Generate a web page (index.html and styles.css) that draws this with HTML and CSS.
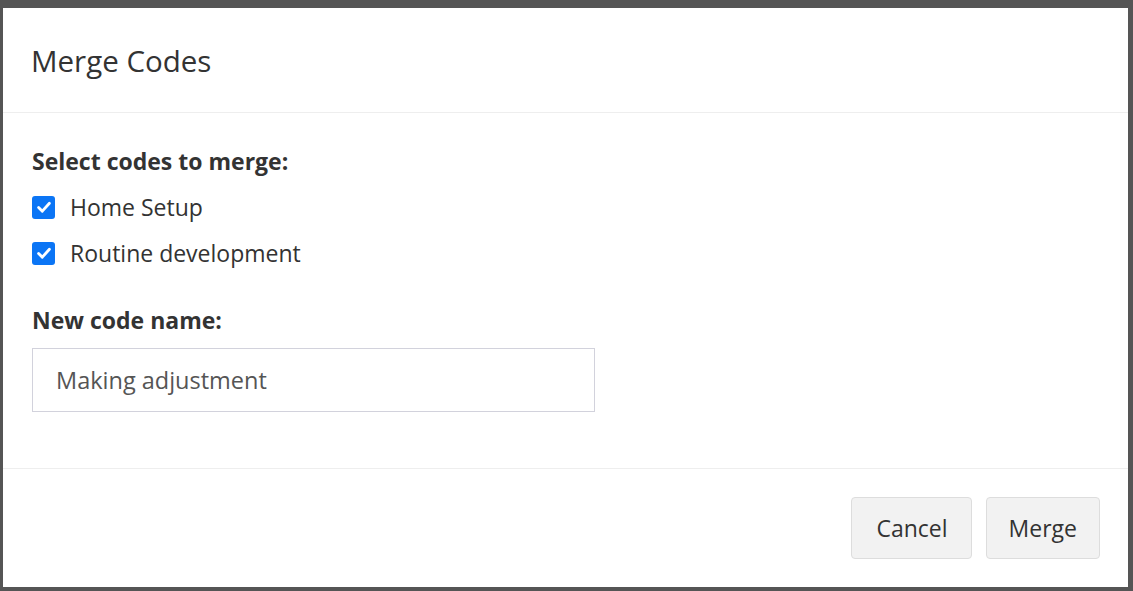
FILE: index.html
```html
<!DOCTYPE html>
<html lang="en">
<head>
<meta charset="utf-8">
<title>Merge Codes</title>
<link rel="stylesheet" href="styles.css">
</head>
<body>
<div class="dialog">
  <div class="dialog-header">
    <h1 class="dialog-title">Merge Codes</h1>
  </div>
  <div class="dialog-body">
    <div class="field-label">Select codes to merge:</div>
    <div class="check-list">
      <label class="check-row">
        <span class="check-box"><svg viewBox="0 0 24 24" width="24" height="24"><path d="M5.5 12.5 L10 17 L18.5 7.5" fill="none" stroke="#fff" stroke-width="3.4" stroke-linecap="round" stroke-linejoin="round"/></svg></span>
        <span class="check-text">Home Setup</span>
      </label>
      <label class="check-row">
        <span class="check-box"><svg viewBox="0 0 24 24" width="24" height="24"><path d="M5.5 12.5 L10 17 L18.5 7.5" fill="none" stroke="#fff" stroke-width="3.4" stroke-linecap="round" stroke-linejoin="round"/></svg></span>
        <span class="check-text">Routine development</span>
      </label>
    </div>
    <div class="field-label name-label">New code name:</div>
    <div class="text-input">Making adjustment</div>
  </div>
  <div class="dialog-footer">
    <button class="btn btn-cancel">Cancel</button>
    <button class="btn">Merge</button>
  </div>
</div>
</body>
</html>
```

FILE: styles.css
```css
html, body {
  margin: 0;
  padding: 0;
  background: #555555;
}
body {
  padding: 8px 5px 4px 3px;
  font-family: "Open Sans", Lato, sans-serif;
  color: #333333;
}
.dialog {
  background: #ffffff;
  height: 579px;
  display: flex;
  flex-direction: column;
}
.dialog-header {
  height: 104px;
  border-bottom: 1px solid #eeeeee;
  display: flex;
  align-items: center;
  padding-left: 28px;
}
.dialog-title {
  margin: 0;
  font-weight: 400;
  font-size: 29.5px;
  line-height: 36px;
  color: #333333;
  position: relative;
  top: 1px;
}
.dialog-body {
  flex: 1;
  padding: 34px 29px 0 29px;
  border-bottom: 1px solid #eeeeee;
}
.field-label {
  font-weight: 700;
  font-size: 23px;
  line-height: 28px;
  color: #333333;
}
.check-list {
  margin-top: 9px;
}
.check-row {
  display: flex;
  align-items: center;
  gap: 15px;
  height: 46px;
}
.check-box {
  width: 23px;
  height: 23px;
  border-radius: 3px;
  background: #0b75f5;
  display: flex;
  align-items: center;
  justify-content: center;
  flex: none;
}
.check-box svg {
  width: 20px;
  height: 20px;
}
.check-text {
  font-size: 23px;
  color: #333333;
}
.name-label {
  margin-top: 30px;
}
.text-input {
  margin-top: 14px;
  box-sizing: border-box;
  width: 563px;
  height: 64px;
  border: 1px solid #d2d2dc;
  display: flex;
  align-items: center;
  padding-left: 23px;
  font-size: 23.5px;
  color: #555555;
}
.dialog-footer {
  height: 118px;
  display: flex;
  align-items: center;
  justify-content: flex-end;
  gap: 14px;
  padding-right: 28px;
}
.btn {
  font-family: "Open Sans", Lato, sans-serif;
  font-size: 23px;
  color: #333333;
  background: #f2f2f2;
  border: 1px solid #dddddd;
  border-radius: 4px;
  height: 62px;
  padding: 0 22px;
}
.btn-cancel {
  padding: 0 23px 0 24px;
}
```
